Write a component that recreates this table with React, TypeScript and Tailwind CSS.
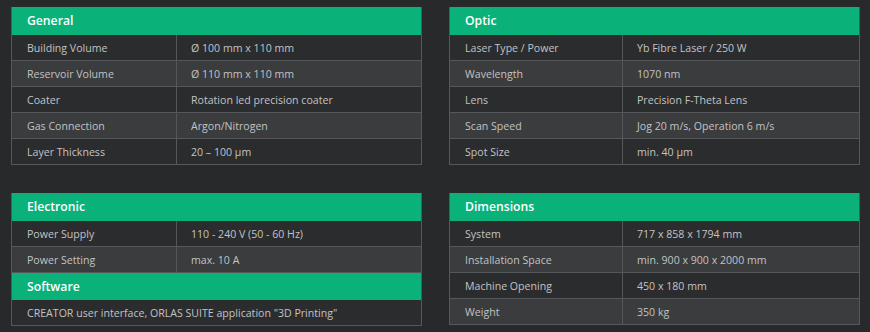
import React from "react";

type Row = [string, string];

const font = { fontFamily: '"Open Sans", "Noto Sans", sans-serif' };

function Header({ title, h = "h-[28px]" }: { title: string; h?: string }) {
  return (
    <div className={`${h} bg-[#0ab27a] flex items-center pl-[15px] pt-[1px] text-white font-semibold text-[12.2px]`}>
      {title}
    </div>
  );
}

function Rows({ rows, labelW }: { rows: Row[]; labelW: string }) {
  return (
    <>
      {rows.map(([k, v], i) => (
        <div
          key={k}
          className={`flex h-[26px] border-b border-[#55575a] ${i % 2 === 1 ? "bg-[#3a3c3e]" : "bg-[#2b2c2e]"}`}
        >
          <div className={`${labelW} shrink-0 border-r border-[#55575a] flex items-center pl-[15px] pt-[2px]`}>{k}</div>
          <div className="flex-1 flex items-center pl-[14px] pt-[2px]">{v}</div>
        </div>
      ))}
    </>
  );
}

function Table({ title, rows, labelW }: { title: string; rows: Row[]; labelW: string }) {
  return (
    <div className="border-x border-[#55575a]">
      <Header title={title} />
      <Rows rows={rows} labelW={labelW} />
    </div>
  );
}

export default function App() {
  return (
    <div
      className="w-[870px] h-[332px] bg-[#28292b] text-[#c2c3c4] text-[10.6px] pl-[11px] pt-[7px] flex gap-[27px]"
      style={font}
    >
      <div className="w-[411px] flex flex-col gap-[28px]">
        <Table
          title="General"
          labelW="w-[165px]"
          rows={[
            ["Building Volume", "Ø 100 mm x 110 mm"],
            ["Reservoir Volume", "Ø 110 mm x 110 mm"],
            ["Coater", "Rotation led precision coater"],
            ["Gas Connection", "Argon/Nitrogen"],
            ["Layer Thickness", "20 – 100 µm"],
          ]}
        />
        <div className="border-x border-[#55575a]">
          <Header title="Electronic" />
          <Rows
            labelW="w-[165px]"
            rows={[
              ["Power Supply", "110 - 240 V (50 - 60 Hz)"],
              ["Power Setting", "max. 10 A"],
            ]}
          />
          <Header title="Software" h="h-[27px]" />
          <div className="h-[26px] border-b border-[#55575a] bg-[#2b2c2e] flex items-center pl-[15px] pt-[2px]">
            CREATOR user interface, ORLAS SUITE application "3D Printing"
          </div>
        </div>
      </div>
      <div className="w-[411px] flex flex-col gap-[28px]">
        <Table
          title="Optic"
          labelW="w-[173px]"
          rows={[
            ["Laser Type / Power", "Yb Fibre Laser / 250 W"],
            ["Wavelength", "1070 nm"],
            ["Lens", "Precision F-Theta Lens"],
            ["Scan Speed", "Jog 20 m/s, Operation 6 m/s"],
            ["Spot Size", "min. 40 µm"],
          ]}
        />
        <Table
          title="Dimensions"
          labelW="w-[173px]"
          rows={[
            ["System", "717 x 858 x 1794 mm"],
            ["Installation Space", "min. 900 x 900 x 2000 mm"],
            ["Machine Opening", "450 x 180 mm"],
            ["Weight", "350 kg"],
          ]}
        />
      </div>
    </div>
  );
}
